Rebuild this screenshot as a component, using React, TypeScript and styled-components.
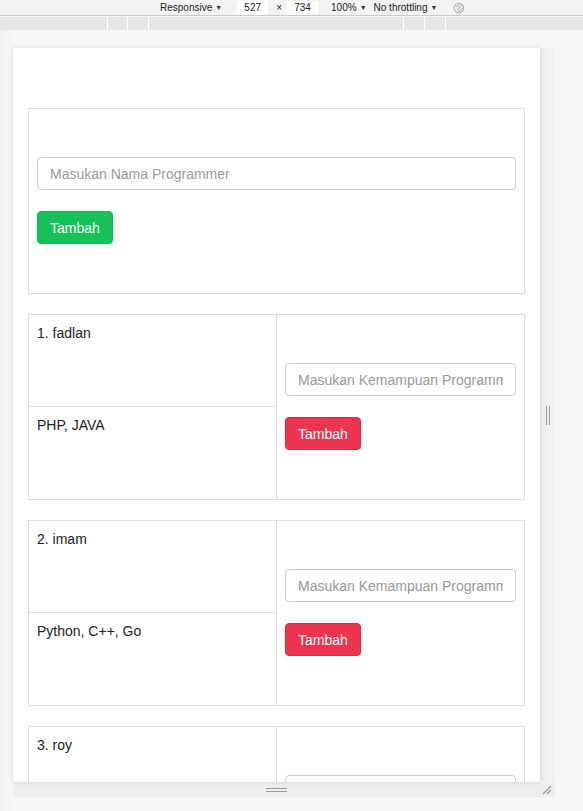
import React from "react";
import styled, { createGlobalStyle } from "styled-components";

const Global = createGlobalStyle`
  html, body { margin: 0; padding: 0; background: #f7f7f7; }
  body { font-family: "Liberation Sans", Arial, sans-serif; width: 583px; height: 811px; overflow: hidden; }
  * { box-sizing: border-box; }
`;

const Shell = styled.div`
  width: 583px;
  height: 811px;
  display: flex;
  flex-direction: column;
  background: #f7f7f7;
`;

const Toolbar = styled.div`
  height: 16px;
  display: flex;
  align-items: center;
  padding-left: 160px;
  background: #f3f3f3;
  border-bottom: 1px solid #cbcbcb;
  font-size: 10px;
  color: #222;
  white-space: nowrap;
`;

const ToolItem = styled.span<{ $ml?: number }>`
  margin-left: ${(p) => p.$ml ?? 0}px;
  display: inline-flex;
  align-items: center;
  gap: 3px;
`;

const Caret = styled.span`
  font-size: 7px;
  color: #333;
`;

const DimBox = styled.span<{ $ml: number }>`
  margin-left: ${(p) => p.$ml}px;
  width: 31px;
  height: 14px;
  background: #fff;
  display: inline-flex;
  align-items: center;
  justify-content: center;
`;

const Ruler = styled.div`
  margin-top: 1px;
  height: 13px;
  display: flex;
  gap: 1px;
  background: #fff;
`;

const RulerSeg = styled.div<{ $w: number }>`
  width: ${(p) => p.$w}px;
  flex: none;
  background: #e5e5e5;
`;

const Stage = styled.div`
  flex: 1;
  padding: 18px 0 0 13px;
  background: linear-gradient(to right, #efefef 0px, #f7f7f7 12px);
`;

const DeviceWrap = styled.div`
  display: grid;
  grid-template-columns: 527px 15px;
  grid-template-rows: 734px 15px;
`;

const Device = styled.div`
  background: #fff;
  overflow: hidden;
  box-shadow: 0 0 5px rgba(0, 0, 0, 0.12);
  position: relative;
  z-index: 1;
`;

const SideHandle = styled.div`
  background: linear-gradient(to right, #ececec, #f3f3f3);
  display: flex;
  align-items: center;
  justify-content: center;
`;

const VGrip = styled.div`
  width: 4px;
  height: 19px;
  border-left: 1px solid #9a9a9a;
  border-right: 1px solid #9a9a9a;
`;

const BottomHandle = styled.div`
  grid-column: 1 / span 2;
  background: #eeeeee;
  display: flex;
  align-items: center;
  justify-content: center;
  position: relative;
`;

const HGrip = styled.div`
  width: 21px;
  height: 4px;
  margin-left: -16px;
  border-top: 1px solid #9a9a9a;
  border-bottom: 1px solid #9a9a9a;
`;

const CornerGrip = styled.svg`
  position: absolute;
  right: 3px;
  top: 3px;
`;

const Container = styled.div`
  padding: 60px 15px 0;
  display: flex;
  flex-direction: column;
  gap: 20px;
`;

const FormCard = styled.div`
  height: 186px;
  border: 1px solid #ddd;
  padding: 48px 8px 0;
  display: flex;
  flex-direction: column;
  align-items: flex-start;
  gap: 21px;
  flex: none;
`;

const Input = styled.input`
  width: 100%;
  height: 33px;
  border: 1px solid #ccc;
  border-radius: 4px;
  padding: 6px 12px;
  font-family: "Liberation Sans", Arial, sans-serif;
  font-size: 14px;
  color: #555;
  background: #fff;
  outline: none;
  &::placeholder { color: #999; }
`;

const Button = styled.button<{ $variant: "success" | "danger" }>`
  height: 33px;
  padding: 0 12px;
  border-radius: 4px;
  font-family: "Liberation Sans", Arial, sans-serif;
  font-size: 14px;
  color: #fff;
  border: 1px solid ${(p) => (p.$variant === "success" ? "#11b94f" : "#e02a46")};
  background: ${(p) => (p.$variant === "success" ? "#16c257" : "#ee3450")};
`;

const RowCard = styled.div`
  height: 186px;
  border: 1px solid #ddd;
  display: grid;
  grid-template-columns: 248px 1fr;
  flex: none;
`;

const LeftCol = styled.div`
  border-right: 1px solid #ddd;
  display: flex;
  flex-direction: column;
`;

const Cell = styled.div<{ $divider?: boolean }>`
  flex: ${(p) => (p.$divider ? "1" : "0 0 91px")};
  padding: 8px;
  font-size: 14px;
  line-height: 20px;
  color: #222;
  border-top: ${(p) => (p.$divider ? "1px solid #ddd" : "none")};
`;

const RightCol = styled.div`
  padding: 48px 8px 0;
  display: flex;
  flex-direction: column;
  align-items: flex-start;
  gap: 21px;
`;

const programmers = [
  { name: "fadlan", skills: "PHP, JAVA" },
  { name: "imam", skills: "Python, C++, Go" },
  { name: "roy", skills: "" },
];

export default function App() {
  return (
    <>
      <Global />
      <Shell>
        <Toolbar>
          <ToolItem>
            Responsive <Caret>▼</Caret>
          </ToolItem>
          <DimBox $ml={15}>527</DimBox>
          <ToolItem $ml={8}>×</ToolItem>
          <DimBox $ml={5}>734</DimBox>
          <ToolItem $ml={13}>
            100% <Caret>▼</Caret>
          </ToolItem>
          <ToolItem $ml={7}>
            No throttling <Caret>▼</Caret>
          </ToolItem>
          <ToolItem $ml={16}>
            <svg width="12" height="12" viewBox="0 0 12 12" fill="none" stroke="#b5b5b5" strokeWidth="1.1">
              <circle cx="6" cy="6" r="4.8" />
              <path d="M3.2 5.2 L6.8 1.6 M4 8 L8.8 3.2 M5.2 10.4 L10.4 5.2" />
            </svg>
          </ToolItem>
        </Toolbar>
        <Ruler>
          {[107, 19, 20, 254, 20, 20, 137].map((w, i) => (
            <RulerSeg key={i} $w={w} />
          ))}
        </Ruler>
        <Stage>
          <DeviceWrap>
            <Device>
              <Container>
                <FormCard>
                  <Input placeholder="Masukan Nama Programmer" />
                  <Button $variant="success">Tambah</Button>
                </FormCard>
                {programmers.map((p, i) => (
                  <RowCard key={p.name}>
                    <LeftCol>
                      <Cell>
                        {i + 1}. {p.name}
                      </Cell>
                      <Cell $divider>{p.skills}</Cell>
                    </LeftCol>
                    <RightCol>
                      <Input placeholder="Masukan Kemampuan Programmer" />
                      <Button $variant="danger">Tambah</Button>
                    </RightCol>
                  </RowCard>
                ))}
              </Container>
            </Device>
            <SideHandle>
              <VGrip />
            </SideHandle>
            <BottomHandle>
              <HGrip />
              <CornerGrip width="10" height="10" viewBox="0 0 10 10" stroke="#999" strokeWidth="1.2">
                <path d="M1 9 L9 1 M5 9 L9 5" />
              </CornerGrip>
            </BottomHandle>
          </DeviceWrap>
        </Stage>
      </Shell>
    </>
  );
}
